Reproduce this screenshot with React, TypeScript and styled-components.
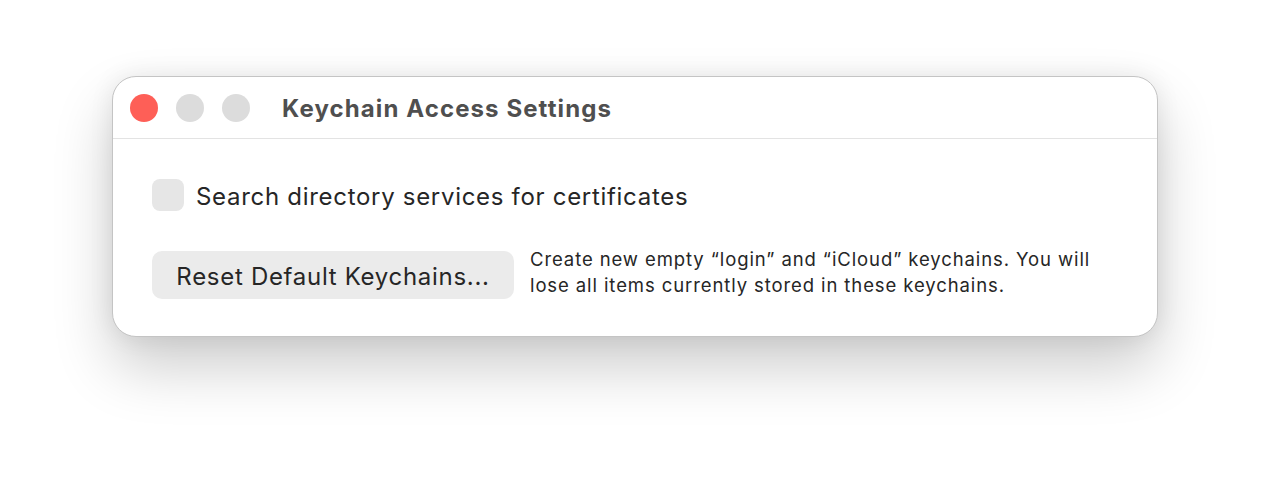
import * as React from 'react';
import styled, { createGlobalStyle } from 'styled-components';

const GlobalStyle = createGlobalStyle`
	html, body {
		margin: 0;
		padding: 0;
		background: #ffffff;
		font-family: Inter, "Noto Sans", "Liberation Sans", sans-serif;
		-webkit-font-smoothing: antialiased;
	}
`;

const Page = styled.div`
	display: flex;
	justify-content: center;
	padding-top: 76px;
	height: 486px;
	box-sizing: border-box;
`;

const Window = styled.div`
	width: 1046px;
	height: 261px;
	box-sizing: border-box;
	background: #ffffff;
	border: 1px solid #c4c4c4;
	border-radius: 24px;
	box-shadow: 0 30px 60px rgba(0, 0, 0, 0.2), 0 0 24px rgba(0, 0, 0, 0.08);
	display: flex;
	flex-direction: column;
	overflow: hidden;
`;

const TitleBar = styled.div`
	height: 62px;
	box-sizing: border-box;
	display: flex;
	align-items: center;
	padding-left: 17px;
	border-bottom: 1px solid #e3e3e3;
`;

const Lights = styled.div`
	display: flex;
	gap: 18px;
	margin-right: 32px;
`;

const Light = styled.span<{ $color: string }>`
	width: 28px;
	height: 28px;
	border-radius: 50%;
	background: ${p => p.$color};
`;

const Title = styled.h1`
	margin: 0 0 -2px;
	font-size: 24px;
	font-weight: 700;
	color: #4f4f4f;
	letter-spacing: 1.1px;
`;

const Content = styled.div`
	padding: 40px 40px 0 39px;
	display: flex;
	flex-direction: column;
	gap: 40px;
`;

const CheckRow = styled.label`
	display: flex;
	align-items: center;
	gap: 12px;
`;

const CheckBox = styled.span`
	width: 32px;
	height: 32px;
	border-radius: 8px;
	background: #e6e6e6;
`;

const Label = styled.span`
	font-size: 24px;
	letter-spacing: 0.7px;
	color: #262626;
	margin-bottom: -3px;
`;

const ResetRow = styled.div`
	display: flex;
	align-items: flex-start;
	gap: 16px;
`;

const Button = styled.button`
	width: 362px;
	height: 48px;
	border: none;
	border-radius: 10px;
	background: #ebebeb;
	font-family: inherit;
	font-size: 24px;
	letter-spacing: 0.7px;
	color: #262626;
	padding: 2px 0 0;
`;

const Description = styled.p`
	margin: -4px 0 0;
	font-size: 18.5px;
	letter-spacing: 0.9px;
	line-height: 25.5px;
	color: #262626;
	max-width: 600px;
`;

export default function App() {
	return (
		<>
			<GlobalStyle />
			<Page>
				<Window>
					<TitleBar>
						<Lights>
							<Light $color="#fe5f57" />
							<Light $color="#dcdcdc" />
							<Light $color="#dcdcdc" />
						</Lights>
						<Title>Keychain Access Settings</Title>
					</TitleBar>
					<Content>
						<CheckRow>
							<CheckBox />
							<Label>Search directory services for certificates</Label>
						</CheckRow>
						<ResetRow>
							<Button>Reset Default Keychains...</Button>
							<Description>
								Create new empty “login” and “iCloud” keychains. You will
								<br />
								lose all items currently stored in these keychains.
							</Description>
						</ResetRow>
					</Content>
				</Window>
			</Page>
		</>
	);
}
